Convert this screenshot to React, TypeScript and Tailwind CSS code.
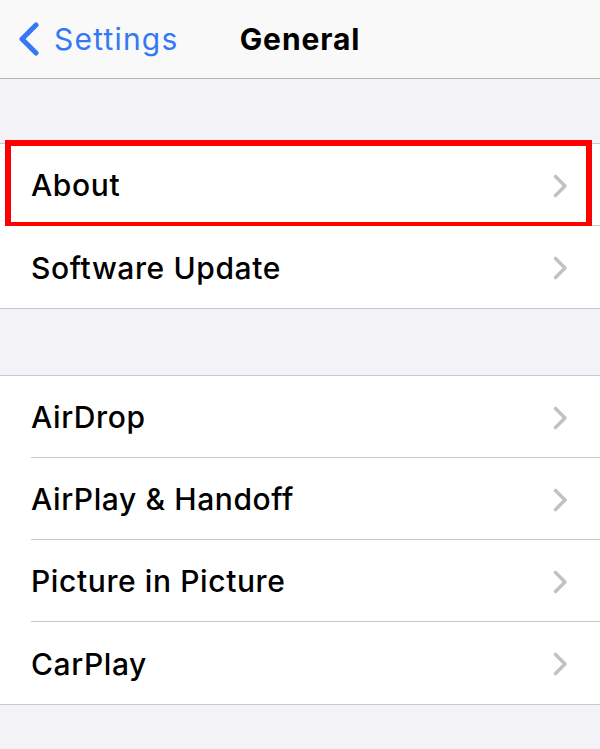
import React from "react";

const font = { fontFamily: "Inter, 'Noto Sans', sans-serif" };

const Chevron: React.FC = () => (
  <svg width="16" height="26" viewBox="0 0 16 26" fill="none" className="shrink-0">
    <path d="M3.5 3.5l9.5 9.5-9.5 9.5" stroke="#c2c2c5" strokeWidth="3.6" strokeLinecap="round" strokeLinejoin="round" />
  </svg>
);

const Row: React.FC<{ label: string; last?: boolean; highlight?: boolean }> = ({ label, last, highlight }) => (
  <div className="relative pl-[31px] bg-white">
    <div className={`h-[82px] flex items-center justify-between pr-[32px] pt-[2px] ${last ? "" : "border-b border-[#c8c7cc]"}`}>
      <span className="text-[30px] font-medium text-black tracking-[0.6px]">{label}</span>
      <Chevron />
    </div>
    {highlight && (
      <div className="absolute left-[5px] right-[8px] top-[-4px] bottom-[-2px] border-[6px] border-[#ff0000] pointer-events-none" />
    )}
  </div>
);

const Group: React.FC<{ items: string[]; highlightFirst?: boolean }> = ({ items, highlightFirst }) => (
  <div className="border-t border-b border-[#c8c7cc]">
    {items.map((item, i) => (
      <Row key={item} label={item} last={i === items.length - 1} highlight={highlightFirst && i === 0} />
    ))}
  </div>
);

export default function App() {
  return (
    <div className="w-[600px] h-[749px] bg-[#f2f2f7] overflow-hidden" style={font}>
      {/* Nav bar */}
      <div className="relative h-[79px] bg-[#f9f9f9] border-b border-[#b5b5b8] flex items-center justify-center">
        <div className="absolute left-[17px] top-0 h-full flex items-center gap-[13px]">
          <svg width="24" height="34" viewBox="0 0 24 34" fill="none">
            <path d="M19 3L5 17l14 14" stroke="#3478f6" strokeWidth="5" strokeLinecap="round" strokeLinejoin="round" />
          </svg>
          <span className="text-[30px] text-[#3478f6] tracking-[1.2px]">Settings</span>
        </div>
        <span className="text-[30px] font-bold text-black tracking-[0.9px]">General</span>
      </div>

      <div className="h-[64px]" />
      <Group items={["About", "Software Update"]} highlightFirst />

      <div className="h-[66px]" />
      <Group items={["AirDrop", "AirPlay & Handoff", "Picture in Picture", "CarPlay"]} />
    </div>
  );
}
